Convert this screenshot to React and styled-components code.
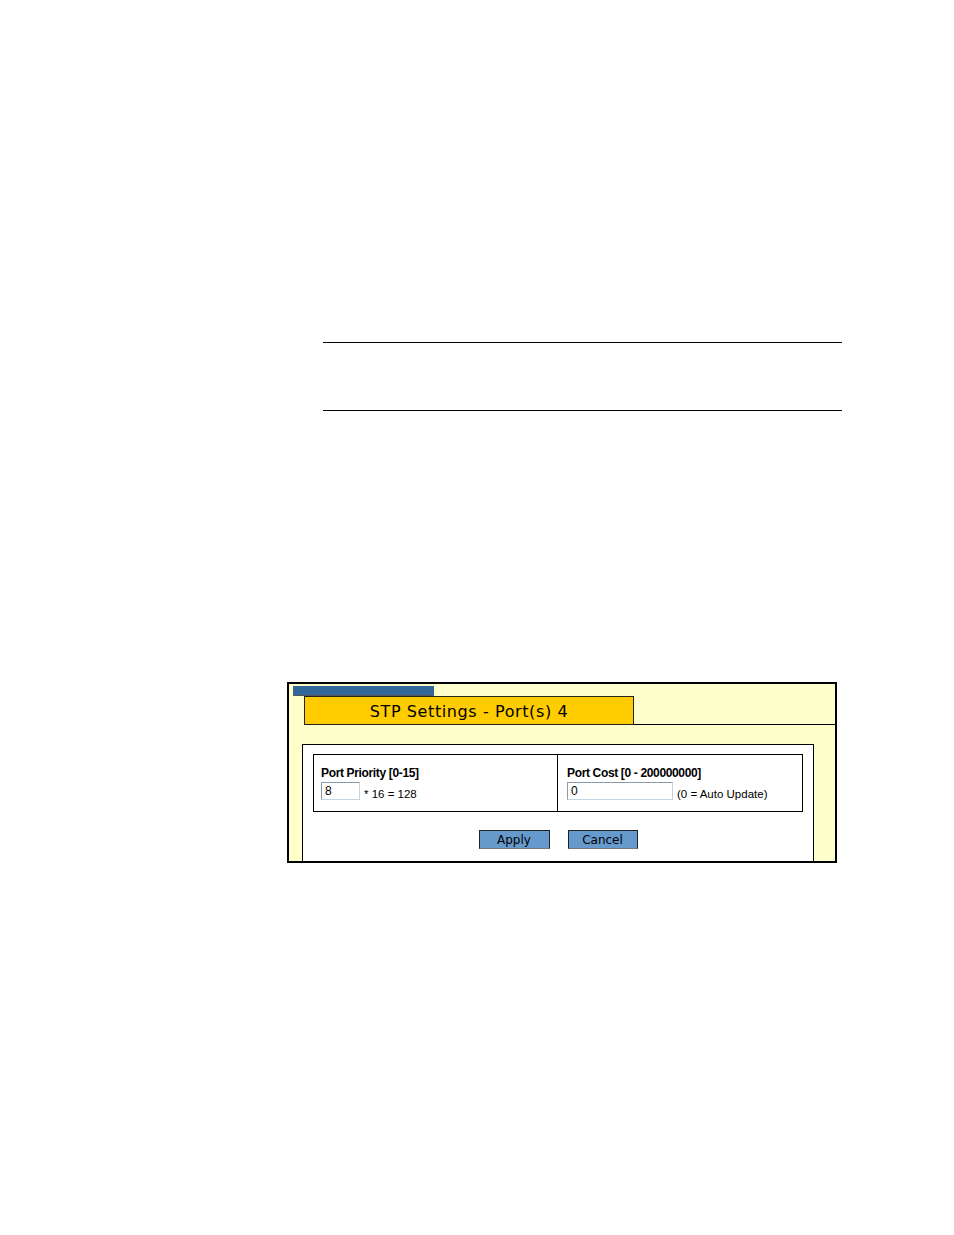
import React from "react";
import styled, { createGlobalStyle } from "styled-components";

const GlobalStyle = createGlobalStyle`
  html, body {
    margin: 0;
    padding: 0;
    background: #fff;
  }
  #root {
    min-height: 1235px;
  }
`;

const Page = styled.div`
  width: 954px;
  min-height: 1235px;
  padding-top: 342px;
  box-sizing: border-box;
`;

const RuleBlock = styled.div`
  margin-left: 323px;
  width: 519px;
  height: 69px;
  border-top: 1px solid #000;
  border-bottom: 1px solid #000;
  box-sizing: border-box;
`;

const Frame = styled.div`
  margin: 271px 0 0 287px;
  width: 550px;
  height: 181px;
  box-sizing: border-box;
  border: 2px solid #000;
  background: #ffffcc;
  display: flex;
  flex-direction: column;
`;

const Header = styled.div`
  position: relative;
  display: flex;
  align-items: flex-end;
  padding-top: 12px;
`;

const Tab = styled.div`
  position: absolute;
  top: 2px;
  left: 4px;
  width: 141px;
  height: 10px;
  background: #336699;
  border-bottom: 1px solid #555;
  box-sizing: border-box;
`;

const Title = styled.div`
  margin-left: 15px;
  width: 330px;
  height: 29px;
  box-sizing: border-box;
  background: #ffcc00;
  border: 1px solid #222;
  display: flex;
  align-items: center;
  justify-content: center;
  font-family: "DejaVu Sans", Verdana, sans-serif;
  font-size: 16px;
  letter-spacing: 0.6px;
  color: #000;
  padding-top: 1px;
`;

const TitleFill = styled.div`
  flex: 1;
  border-bottom: 1px solid #000;
`;

const Panel = styled.div`
  margin: 19px 0 0 13px;
  width: 512px;
  flex: 1;
  box-sizing: border-box;
  background: #fff;
  border: 1px solid #000;
  border-bottom: none;
  padding: 9px 10px 0;
  display: flex;
  flex-direction: column;
  align-items: center;
`;

const Table = styled.div`
  width: 100%;
  height: 58px;
  box-sizing: border-box;
  border: 1px solid #000;
  display: grid;
  grid-template-columns: 243px 1fr;
`;

const Cell = styled.div`
  padding-top: 11px;
  border-left: ${(p) => (p.$divided ? "1px solid #000" : "none")};
  padding-left: ${(p) => (p.$divided ? "9px" : "7px")};
  font-family: "Liberation Sans", Arial, sans-serif;
`;

const Label = styled.div`
  font-weight: bold;
  font-size: 12px;
  letter-spacing: -0.35px;
  line-height: 14px;
  color: #000;
`;

const FieldRow = styled.div`
  display: flex;
  align-items: center;
  margin-top: 2px;
`;

const Input = styled.input`
  width: ${(p) => p.$w}px;
  height: 18px;
  box-sizing: border-box;
  margin: 0;
  padding: 0 3px;
  border: 1px solid;
  border-color: #8a9aa8 #c3d4e4 #c3d4e4 #8a9aa8;
  font-family: "Liberation Sans", Arial, sans-serif;
  font-size: 12px;
  color: #000;
  background: #fff;
  outline: none;
`;

const Hint = styled.span`
  margin-left: 4px;
  margin-top: 5px;
  font-size: 11.5px;
  color: #000;
`;

const Buttons = styled.div`
  display: flex;
  gap: 18px;
  margin-top: 18px;
`;

const Button = styled.button`
  width: ${(p) => p.$w}px;
  height: 19px;
  margin: 0;
  padding: 0;
  box-sizing: border-box;
  background: #6699cc;
  border: 1px solid #222;
  border-bottom-color: #777;
  font-family: "DejaVu Sans", Verdana, sans-serif;
  font-size: 12px;
  color: #000;
  line-height: 16px;
`;

export default function App() {
  return (
    <>
      <GlobalStyle />
      <Page>
        <RuleBlock />
        <Frame>
          <Header>
            <Tab />
            <Title>STP Settings - Port(s) 4</Title>
            <TitleFill />
          </Header>
          <Panel>
            <Table>
              <Cell>
                <Label>Port Priority [0-15]</Label>
                <FieldRow>
                  <Input $w={39} defaultValue="8" />
                  <Hint>* 16 = 128</Hint>
                </FieldRow>
              </Cell>
              <Cell $divided>
                <Label>Port Cost [0 - 200000000]</Label>
                <FieldRow>
                  <Input $w={106} defaultValue="0" />
                  <Hint>(0 = Auto Update)</Hint>
                </FieldRow>
              </Cell>
            </Table>
            <Buttons>
              <Button $w={71}>Apply</Button>
              <Button $w={70}>Cancel</Button>
            </Buttons>
          </Panel>
        </Frame>
      </Page>
    </>
  );
}
